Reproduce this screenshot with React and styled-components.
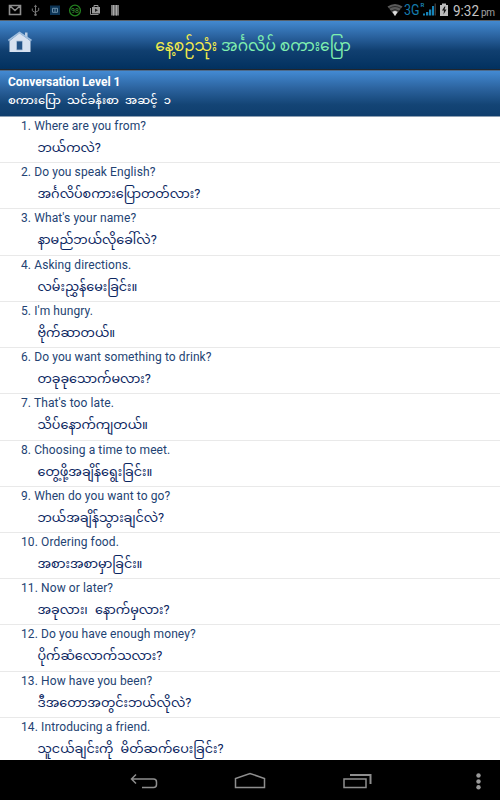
import React from "react";
import styled, { createGlobalStyle } from "styled-components";

const GlobalStyle = createGlobalStyle`
	* {
		box-sizing: border-box;
	}

	body {
		margin: 0;
		background: #000;
		font-family: Roboto, "Noto Sans Myanmar", "Noto Sans", sans-serif;
	}
`;

const Screen = styled.div`
	display: flex;
	flex-direction: column;
	width: 500px;
	height: 800px;
	overflow: hidden;
	background: #fff;
`;

const StatusBar = styled.div`
	display: flex;
	flex: none;
	justify-content: space-between;
	height: 20px;
	background: #000;
`;

const TitleBar = styled.header`
	display: flex;
	flex: none;
	align-items: center;
	height: 50px;
	padding: 0 8px 6px;
	border-top: 1px solid #56606b;
	border-bottom: 1px solid #20262e;
	background: linear-gradient(#4389d0, #285f9b 35%, #103f70 62%, #02315f);
`;

const Title = styled.h1`
	flex: 1;
	margin: 0 42px 0 0;
	padding: 7px 0 0 24px;
	color: #7fefb0;
	font-size: 15.5px;
	font-weight: 400;
	line-height: 30px;
	text-align: center;
	white-space: nowrap;
`;

const Accent = styled.span`
	color: #f4ec4c;
`;

const LevelHeader = styled.section`
	flex: none;
	height: 47px;
	padding: 4px 8px 0;
	border-top: 1px solid #4c6a8c;
	border-bottom: 1px solid #8c9fb3;
	background: linear-gradient(#438ad3, #2b629d 40%, #134475 75%, #0f3e6d);
	color: #fff;
`;

const LevelName = styled.div`
	font-size: 12px;
	font-weight: 700;
	line-height: 15px;
	letter-spacing: -0.03px;
`;

const LevelNative = styled.div`
	font-size: 11.5px;
	font-weight: 500;
	line-height: 20px;
	white-space: nowrap;
	word-spacing: 3.3px;
`;

const List = styled.ol`
	flex: 1;
	min-height: 0;
	margin: 0;
	padding: 0;
	overflow: hidden;
	list-style: none;
`;

const Row = styled.li`
	height: 46.23px;
	padding: 1px 0 0 21px;
	border-bottom: 1px solid #e9e9e9;
	white-space: nowrap;
`;

const English = styled.div`
	color: #234373;
	font-size: 12px;
	line-height: 16px;
	letter-spacing: 0.1px;
`;

const Native = styled.div`
	padding-left: 16.5px;
	color: #0a2560;
	font-size: 12.75px;
	line-height: 27px;
	word-spacing: 4px;
`;

const NavBar = styled.nav`
	flex: none;
	height: 40px;
	background: #000;
`;

const phrases = [
	["Where are you from?", "ဘယ်ကလဲ?"],
	["Do you speak English?", "အင်္ဂလိပ်စကားပြောတတ်လား?"],
	["What's your name?", "နာမည်ဘယ်လိုခေါ်လဲ?"],
	["Asking directions.", "လမ်းညွှန်မေးခြင်း။"],
	["I'm hungry.", "ဗိုက်ဆာတယ်။"],
	["Do you want something to drink?", "တခုခုသောက်မလား?"],
	["That's too late.", "သိပ်နောက်ကျတယ်။"],
	["Choosing a time to meet.", "တွေ့ဖို့အချိန်ရွေးခြင်း။"],
	["When do you want to go?", "ဘယ်အချိန်သွားချင်လဲ?"],
	["Ordering food.", "အစားအစာမှာခြင်း။"],
	["Now or later?", "အခုလား၊ နောက်မှလား?"],
	["Do you have enough money?", "ပိုက်ဆံလောက်သလား?"],
	["How have you been?", "ဒီအတောအတွင်းဘယ်လိုလဲ?"],
	["Introducing a friend.", "သူငယ်ချင်းကို မိတ်ဆက်ပေးခြင်း?"]
];

const NotificationIcons = () => (
	<svg width="125" height="20" viewBox="0 0 125 20" fill="none">
		<path d="M9.5 14.5v-9h11v9zM9.5 5.5l5.5 5 5.5-5" stroke="#8f8f8f" strokeWidth="1.6" />
		<path d="M35.5 6v9M32.3 8.5v2.2l3.2 2M38.7 7.8v2.7l-3.2 1.7" stroke="#777" />
		<path d="M35.5 4.5l1.6 2.4h-3.2z" fill="#777" />
		<circle cx="35.5" cy="14.7" r="1.3" fill="#777" />
		<path d="M50 5.5h10v9.5H50z" fill="#0b3355" />
		<path d="M52.5 8.3h5v4h-5zM55 8.3v4" stroke="#6a8ca6" />
		<circle cx="75" cy="10.5" r="5.4" stroke="#23811f" strokeWidth="1.3" />
		<text x="75" y="13" fill="#3a9a35" fontSize="7" textAnchor="middle">
			98
		</text>
		<path d="M90.5 8v6.5h8" stroke="#8f8f8f" />
		<path d="M92 7h8v6.5h-8z" fill="#999" />
		<path d="M94 7V5.5h4V7" stroke="#999" />
		<path d="M95 8.5l3 1.8-3 1.8z" fill="#222" />
		<path d="M111 5h8v10.5h-8z" fill="#777" />
		<path d="M113.5 5v10.5M116.5 5v10.5" stroke="#aaa" />
	</svg>
);

const SystemIcons = () => (
	<svg width="130" height="20" viewBox="0 0 130 20" fill="none">
		<path d="M17.5 6.5Q25 1.5 32.5 6.5L25 16z" fill="#5a5a5a" />
		<path d="M19 8.5q6-4 12 0M21 11q4-2.8 8 0" stroke="#1a1a1a" strokeWidth=".8" />
		<path d="M22.5 12q2.5-1.8 5 0L25 16z" fill="#ddd" />
		<text x="34" y="14.5" fill="#157cad" fontSize="14.5" textLength="15.5" lengthAdjust="spacingAndGlyphs">
			3G
		</text>
		<text x="50.5" y="7" fill="#1c8fc6" fontSize="6" fontWeight="500">
			R
		</text>
		<path d="M53 15.5v-2h2v2zM56 15.5V12h2.3v3.5zM59 15.5V9.5h2.3v6z" fill="#1683b8" />
		<path d="M62 15.5V6h2v9.5z" fill="#1683b8" />
		<path d="M64.5 15.5v-12H66v12z" fill="#383838" />
		<path d="M70 5h2V3.5h4V5h2v11h-8z" fill="#bcbcbc" />
		<path d="M74.5 6.5l-2.5 4h2l-.5 4 3-5h-2l1-3z" fill="#111" />
		<text x="83" y="16" fill="#c4c4c4" fontSize="14" textLength="26" lengthAdjust="spacingAndGlyphs">
			9:32
		</text>
		<text x="111" y="16" fill="#a2a2a2" fontSize="10" textLength="14">
			pm
		</text>
	</svg>
);

const HouseIcon = () => (
	<svg width="24" height="22" viewBox="0 0 24 22">
		<path d="M1.5 10v11h21V10L11.5 2z" fill="#d7e1f0" />
		<path d="M17 1.5h2.5V8L17 6z" fill="#bccde2" />
		<path d="M.4 9.5l11.1-8 12 8" fill="none" stroke="#9fbddd" strokeWidth="1.6" />
		<path d="M8.5 10h6v9h-6z" fill="#235286" stroke="#adc3dc" strokeWidth=".8" />
	</svg>
);

const NavIcons = () => (
	<svg width="500" height="40" viewBox="0 0 500 40" fill="none" stroke="#8e8e8e" strokeWidth="1.5">
		<path d="M136 14.5l-4.5 4.5 4.5 4.5M131.5 19h22q3 0 3 3v2.5q0 3-3 3H142" />
		<path d="M235.5 27.5v-9l14.5-5 14.5 5v9z" />
		<path d="M344 19h22v8.5h-22z" />
		<path d="M350 15h20.5v9" strokeWidth="2" />
		<g fill="#9a9a9a" stroke="none">
			<circle cx="478.5" cy="15.5" r="2.2" />
			<circle cx="478.5" cy="21.5" r="2.2" />
			<circle cx="478.5" cy="27.3" r="2.2" />
		</g>
	</svg>
);

const App = () => (
	<Screen>
		<GlobalStyle />
		<StatusBar>
			<NotificationIcons />
			<SystemIcons />
		</StatusBar>
		<TitleBar>
			<HouseIcon />
			<Title>
				<Accent>နေ့စဉ်သုံး</Accent> အင်္ဂလိပ် စကားပြော
			</Title>
		</TitleBar>
		<LevelHeader>
			<LevelName>Conversation Level 1</LevelName>
			<LevelNative>စကားပြော သင်ခန်းစာ အဆင့် ၁</LevelNative>
		</LevelHeader>
		<List>
			{phrases.map(([english, native], index) => (
				<Row key={english}>
					<English>
						{index + 1}. {english}
					</English>
					<Native lang="my">{native}</Native>
				</Row>
			))}
		</List>
		<NavBar>
			<NavIcons />
		</NavBar>
	</Screen>
);

export default App;
